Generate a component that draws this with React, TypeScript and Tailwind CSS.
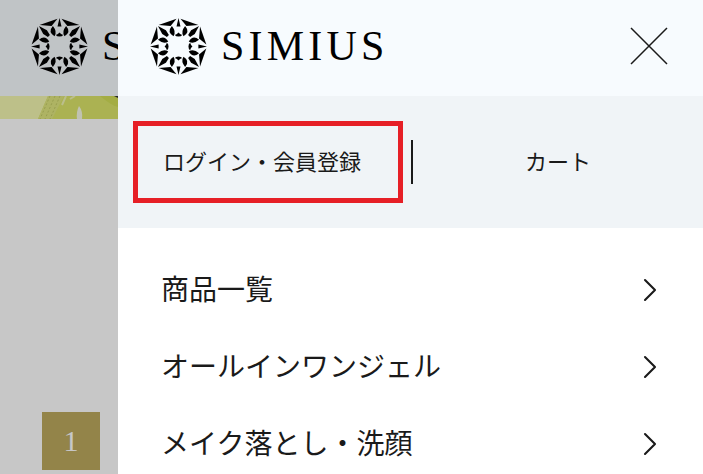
import { ChevronRight } from "lucide-react";

const menuItems = [
  { label: "商品一覧", href: "#products" },
  { label: "オールインワンジェル", href: "#all-in-one" },
  { label: "メイク落とし・洗顔", href: "#cleansing" },
];

const quarterTurns = [0, 90, 180, 270];

function Emblem() {
  return (
    <svg viewBox="-86 -86 172 172" className="h-[57px] w-[57px] shrink-0" fill="currentColor" aria-hidden="true">
      {quarterTurns.map((angle) => (
        <g key={angle} transform={`rotate(${angle})`}>
          {/* spike and inner dome on the axis */}
          <path d="M0-86 6-60H-6Z" />
          <path d="M0-42Q4-37 11-35Q8-30 0-30Q-8-30-11-35Q-4-37 0-42Z" />
          {/* outer facets either side of the corner */}
          <path d="M-60-65-6-84-24-62Z" />
          <path d="M60-65 6-84 24-62Z" />
          {/* corner wedge */}
          <path d="M-62-62-38-49-29-35-35-29-49-38Z" />
          {/* leaves */}
          <path d="M-20-62Q-6-45-15-31Q-36-44-20-62Z" />
          <path d="M20-62Q6-45 15-31Q36-44 20-62Z" />
        </g>
      ))}
    </svg>
  );
}

function Logo({ wordmark }: { wordmark: string }) {
  return (
    <a href="#top" className="flex items-center gap-[14px] text-black">
      <Emblem />
      <span className="font-['Liberation_Serif',serif] text-[42px] leading-none tracking-widest">{wordmark}</span>
    </a>
  );
}

function HeroStrip() {
  return (
    <svg viewBox="0 0 118 23" className="h-[23px] w-[118px]" aria-hidden="true">
      <rect width="118" height="23" fill="#f2f7b0" />
      <path d="M48 0H118V23H38Z" fill="#dbe56a" />
      <path d="M48 0H64L52 23H38Z" fill="#dfe67f" />
      <path d="M50 0 40 23M55 0 45 23M60 0 50 23" stroke="#c3cb66" strokeWidth="1" strokeDasharray="2 2" />
      <path d="M66 0 62 9M75 0 70 3" stroke="#f0f4b4" strokeWidth="2" />
      <path d="M79 10Q76 16 77 23H82Q83 15 79 10Z" fill="#f7f9e4" />
      <path d="M100 0Q112 10 118 11V0Z" fill="#d2de58" />
      <path d="M114 0H118V2Z" fill="#333333" />
    </svg>
  );
}

export default function App() {
  return (
    <div className="flex h-screen overflow-hidden bg-white font-['Noto_Sans_CJK_JP',sans-serif] text-[#1a1a1a]">
      {/* Visible edge of the page behind the drawer */}
      <div className="relative w-[118px] shrink-0 overflow-hidden" aria-hidden="true">
        <div className="flex h-24 items-center overflow-hidden bg-[#f7fbfe] pb-1 pl-[31px]">
          <Logo wordmark="S" />
        </div>
        <HeroStrip />
        <div className="px-[42px] pt-[293px]">
          <div className="flex h-[58px] w-[58px] items-center justify-center bg-[#bda95e] font-['Liberation_Serif',serif] text-3xl text-white">
            1
          </div>
        </div>
        <div className="absolute inset-0 bg-black/22" />
      </div>

      {/* Drawer */}
      <div className="min-w-0 flex-1 overflow-hidden bg-white">
        <header className="flex h-24 items-center justify-between bg-[#f7fbfe] pr-[35px] pb-1 pl-8">
          <Logo wordmark="SIMIUS" />
          <button type="button" aria-label="閉じる">
            <svg viewBox="0 0 38 38" className="h-[38px] w-[38px]" stroke="#1a1a1a" strokeWidth="1.5" aria-hidden="true">
              <path d="M1 1 37 37M37 1 1 37" />
            </svg>
          </button>
        </header>

        <div className="flex h-[132px] items-center bg-[#f0f4f7] pl-[15px] text-[22px]">
          <a
            href="#login"
            className="flex h-[82px] w-[270px] items-center border-[5px] border-[#e61f26] pb-1 pl-[25px] whitespace-nowrap"
          >
            ログイン・会員登録
          </a>
          <div className="ml-2 h-11 w-[2px] bg-[#1a1a1a]" />
          <a href="#cart" className="flex-1 pb-1 text-center">
            カート
          </a>
        </div>

        <nav className="pt-[23px]">
          {menuItems.map((item) => (
            <a
              key={item.href}
              href={item.href}
              className="flex h-[77px] items-center justify-between pr-[33px] pl-[43px] text-[28px]"
            >
              <span className="pb-1">{item.label}</span>
              <ChevronRight className="h-10 w-10" strokeWidth={1.25} />
            </a>
          ))}
        </nav>
      </div>
    </div>
  );
}
